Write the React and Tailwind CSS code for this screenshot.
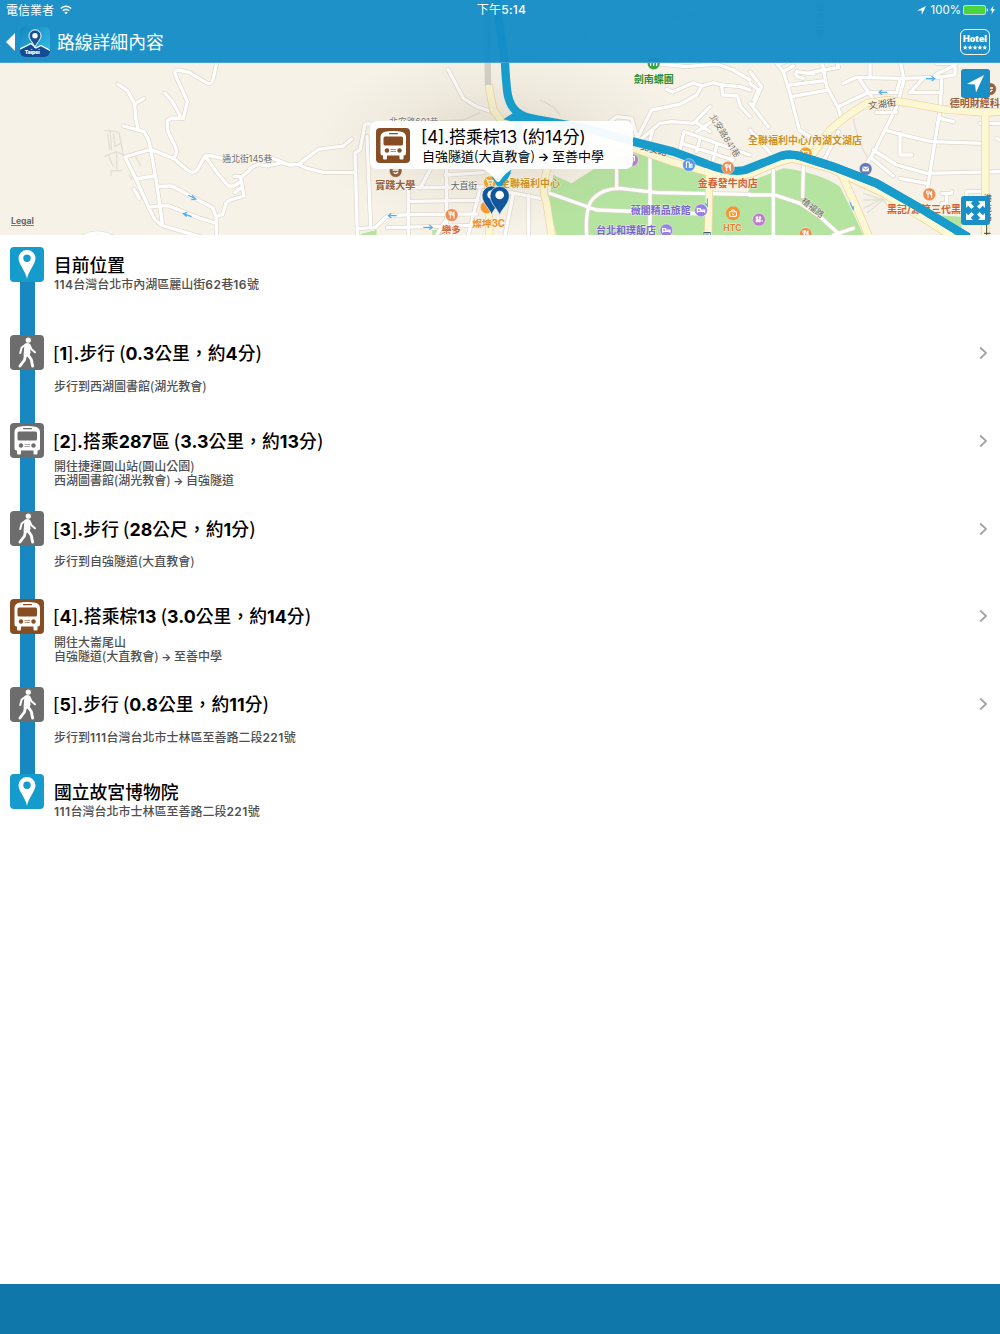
import React from "react";
import clsx from "clsx";

const steps = [
  { type: "place", title: "目前位置", lines: ["114台灣台北市內湖區麗山街62巷16號"] },
  { type: "walk", title: "[1].步行 (0.3公里，約4分)", lines: ["步行到西湖圖書館(湖光教會)"] },
  {
    type: "bus",
    title: "[2].搭乘287區 (3.3公里，約13分)",
    lines: ["開往捷運圓山站(圓山公園)", "西湖圖書館(湖光教會) → 自強隧道"],
  },
  { type: "walk", title: "[3].步行 (28公尺，約1分)", lines: ["步行到自強隧道(大直教會)"] },
  {
    type: "brownBus",
    title: "[4].搭乘棕13 (3.0公里，約14分)",
    lines: ["開往大崙尾山", "自強隧道(大直教會) → 至善中學"],
  },
  { type: "walk", title: "[5].步行 (0.8公里，約11分)", lines: ["步行到111台灣台北市士林區至善路二段221號"] },
  { type: "place", title: "國立故宮博物院", lines: ["111台灣台北市士林區至善路二段221號"] },
];

// The map is drawn in four 750 unit wide tiles, three units to a pixel.
const minorRoads = [
  [
    0,
    [
      "M354 73L382 92L404 132L408 180L416 212",
      "M404 132L431 116",
      "M370 198L432 215L446 240L452 268L375 291L408 357L445 440L465 480L488 497L600 530",
      "M452 268L470 370L480 440L488 497",
      "M408 357L462 348",
      "M470 379L515 378L638 443L648 470L650 530",
      "M445 442L480 437L508 438L600 475L650 490",
      "M402 388L418 415",
      "M452 268L520 295L565 332Q585 346 598 318L615 288L630 287L670 296",
      "M615 288L655 343L685 378L702 378L720 366",
      "M520 295Q532 285 528 265L502 210L502 182L515 174L550 175L562 125L525 42Q522 30 534 30L568 37L622 70Q636 74 640 55L652 0L658 -25",
      "M495 100L515 122L543 172",
      "M750 330L722 352L732 408L690 420Q675 428 675 440L668 463L648 470",
      "M702 349L722 350",
      "M705 398L720 386",
      "M250 530Q290 508 335 530",
    ],
  ],
  [
    750,
    [
      "M0 325L25 313L55 318L95 308L118 315L145 313L205 268L280 258L305 237",
      "M55 290L118 315",
      "M145 313L170 325L220 337L312 338",
      "M594 28L640 115L680 140L735 158",
      "M370 192L345 192L330 270L315 278L322 525",
      "M351 230L362 500",
      "M322 506L375 503L412 468L475 464L680 462",
      "M475 385V525",
      "M590 320V525",
      "M475 424L685 421",
      "M440 384L700 380",
      "M510 385L540 330",
      "M585 345L700 338",
      "M412 503L680 496",
      "M690 385L655 525",
      "M600 460L560 525",
    ],
  ],
  [
    1500,
    [
      "M480 12L560 20L650 12L700 30L750 60",
      "M500 88L518 96L580 68L606 78L590 105L540 133L455 150L412 235",
      "M606 78L640 68L665 75L720 80L750 90",
      "M665 75L668 105L712 108L722 140L750 170",
      "M420 240L480 190L515 185L580 190L630 140",
      "M460 205L450 240",
      "M585 185L630 215",
      "M590 215L650 175",
      "M330 185L350 170L395 175L412 235",
      "M540 270L552 215L750 285",
      "M545 250L700 300",
      "M600 235L590 275",
      "M650 255L640 300",
      "M700 275L690 320",
      "M350 330V385",
      "M450 285V525",
      "M150 400L290 450L620 462",
      "M260 525Q255 440 280 415Q310 385 360 385L470 398L750 403",
      "M20 395L120 415",
      "M85 405V525",
      "M40 400L15 525",
      "M0 395L20 395",
    ],
  ],
  [
    2250,
    [
      "M80 10L100 35L120 100L148 210L195 240L255 240",
      "M0 70L25 90L12 120",
      "M0 35L35 80L10 135",
      "M0 130L55 200",
      "M0 210L70 290",
      "M120 75L225 62",
      "M125 110L235 90",
      "M100 35L130 18",
      "M160 55Q130 50 140 35L190 42",
      "M215 0L230 80L265 145L275 180",
      "M180 38L265 22L260 0",
      "M265 140L350 100",
      "M280 70L320 52L455 55L560 52L615 45L615 15L555 45",
      "M360 0V52",
      "M330 60L375 125",
      "M450 0L462 60L440 140L375 270L345 320",
      "M350 98L440 98L450 60",
      "M480 98L520 55",
      "M480 98L575 98",
      "M380 158L440 157",
      "M575 60L570 150L530 400",
      "M410 212L480 230L545 245L700 250",
      "M450 220V285L485 285",
      "M370 270L440 315L530 340L750 335",
      "M365 295L430 348",
      "M450 355L530 370",
      "M570 175L610 185",
      "M690 190L750 190",
      "M265 215L225 295",
      "M70 330V525",
      "M0 405L75 405L150 430L210 470L270 525",
      "M160 320L158 410",
      "M250 525L310 505",
      "M575 400H605V395M590 400V430L575 430",
      "M650 410L650 395L700 395",
      "M740 235L750 240",
      "M560 10L620 10",
    ],
  ],
  [
    2250,
    ["M45 -30L95 10L190 -30L250 -45L355 -50L450 -30L560 -35L620 -55L700 -40L750 -60", "M200 -50L215 10M250 -45L265 20M445 -30L480 -100"],
  ],
];

const mainRoads = [
  "M1467 260L1480 330L1510 370L1490 540L1465 560L1468 705",
  "M1645 500Q1620 560 1640 610L1655 705",
  "M1560 365L1900 445L2020 487L2120 515L2190 532L2250 522L2325 490L2375 475L2490 505L2650 580L2850 705",
  "M2128 510L2125 705",
  "M2440 460L2490 390Q2540 345 2600 310L2660 300L2720 308L2830 328L2955 338L3000 335",
  "M2956 340V705",
  "M2520 515L2560 600L2605 705",
];

const parks = [
  "M1660 525L1715 550L1785 505L1890 450L2125 520L2112 705H1670L1645 610Z",
  "M2140 585L2240 585L2260 540L2350 505Q2450 515 2520 560L2560 640L2590 705H2135Z",
  "M2795 645L2885 650L2885 705H2850L2790 660Z",
  "M1090 700L1130 690L1130 705H1080Z",
  "M1297 690H1325V705H1297Z",
];

const labels = [
  { x: 33, y: 672, text: "Legal", size: 26, color: "#666", bold: true, underline: true },
  { x: 667, y: 487, text: "通北街145巷", size: 26.5, color: "#6d6d6d" },
  { x: 1168, y: 374, text: "北安路601巷", size: 26, color: "#777" },
  { x: 1126, y: 568, text: "實踐大學", size: 30, color: "#94613e", bold: true },
  { x: 1352, y: 568, text: "大直街", size: 26.5, color: "#666" },
  { x: 1325, y: 700, text: "樂多", size: 29, color: "#d4683e", bold: true },
  { x: 1417, y: 680, text: "燦坤3C", size: 29, color: "#ee8c26", bold: true },
  { x: 1500, y: 560, text: "全聯福利中心", size: 30, color: "#c99128", bold: true },
  { x: 1901, y: 249, text: "劍南蝶園", size: 30, color: "#268c32", bold: true },
  { x: 1892, y: 643, text: "薇閣精品旅館", size: 30, color: "#7a63d1", bold: true },
  { x: 1788, y: 702, text: "台北和璞飯店", size: 30, color: "#7a63d1", bold: true },
  { x: 2093, y: 560, text: "金春發牛肉店", size: 30, color: "#cf6237", bold: true },
  { x: 2170, y: 694, text: "HTC", size: 26, color: "#ed7d2c", bold: true },
  { x: 2244, y: 432, text: "全聯福利中心/內湖文湖店", size: 30, color: "#c99128", bold: true },
  { x: 2606, y: 328, text: "文湖街", size: 28, color: "#555", rotate: -8 },
  { x: 2849, y: 322, text: "德明財經科", size: 30, color: "#94613e", bold: true },
  { x: 2661, y: 639, text: "黑記/源第三代黑", size: 30, color: "#cf6237", bold: true },
  { x: 2402, y: 607, text: "植福路", size: 26, color: "#666", rotate: 38 },
  { x: 2128, y: 350, text: "北安路841巷", size: 26, color: "#777", rotate: 58 },
  { x: 2108, y: 716, text: "四", size: 26, color: "#444" },
];

const Label = ({ x, y, text, size, color, bold, rotate = 0, underline }) => (
  <text
    x={x}
    y={y}
    fontSize={size}
    fill={color}
    fontWeight={bold ? 700 : 400}
    stroke="#fffaf0"
    strokeOpacity=".7"
    strokeWidth="3"
    paintOrder="stroke"
    strokeLinejoin="round"
    textDecoration={underline ? "underline" : undefined}
    transform={`rotate(${rotate} ${x} ${y})`}
  >
    {text}
  </text>
);

const Fork = () => (
  <g fill="none" stroke="#fff" strokeWidth="3" strokeLinecap="round">
    <path d="M-8 -10V-4Q-8 0 -4 0Q0 0 0 -4V-10M-4 -10V10" />
    <path d="M7 10V-10Q3 -8 3 1H7" fill="#fff" />
  </g>
);

const Bed = () => (
  <path d="M-11 7V-8M-11 3H11V7M11 3V-1H-2V-5H-11" fill="none" stroke="#fff" strokeWidth="3.5" />
);

const Cart = () => (
  <g fill="none" stroke="#fff" strokeWidth="3">
    <path d="M-12 -8H-8L-5 3H7L10 -5H-7" />
    <circle cx="-3" cy="8" r="1.5" />
    <circle cx="6" cy="8" r="1.5" />
  </g>
);

const Poi = ({ x, y, color, children }) => (
  <g transform={`translate(${x} ${y})`}>
    <circle r="19" fill={color} stroke="#fff" strokeOpacity=".6" strokeWidth="2" />
    {children}
  </g>
);

const Pin = ({ x, y }) => (
  <g transform={`translate(${x} ${y})`}>
    <path
      d="M0 86C-3 68 -29 51 -29 26A29 28 0 0 1 29 26C29 51 3 68 0 86Z"
      fill="#10569b"
      stroke="#fff"
      strokeWidth="2"
    />
    <circle cy="24" r="13" fill="#fff" />
  </g>
);

const RouteMap = () => (
  <svg
    viewBox="0 0 3000 705"
    className="absolute inset-0 h-[235px] w-[1000px] font-['Inter','Noto_Sans_CJK_TC',sans-serif]"
  >
    <defs>
      <radialGradient id="shade">
        <stop offset="0" stopColor="#8d7f6a" stopOpacity=".24" />
        <stop offset=".6" stopColor="#a19784" stopOpacity=".09" />
        <stop offset="1" stopColor="#a19784" stopOpacity="0" />
      </radialGradient>
    </defs>
    <rect width="3000" height="705" fill="#f7f2e7" />
    {parks.map((d) => (
      <path key={d} d={d} fill="#b5e4a0" />
    ))}
    <g fill="none" stroke="#e2dfd4" strokeWidth="4">
      <path d="M313 392H330L357 398L370 465L350 455L313 470M330 392L335 450M322 400L330 450M340 400L345 440L362 430M350 455V510M325 465L340 500M333 527V512H367M405 465L422 498M387 525L398 540" />
      <path d="M2560 355Q2580 450 2610 480M2590 600L2650 600L2680 640M2600 640L2650 600L2590 580M2590 625L2660 590M1620 300L1660 320L1680 345" />
      <path d="M1100 370L1390 360L1440 338" />
      <path d="M1365 80Q1500 200 1650 180T1740 60M1960 0Q2010 70 2050 50T2120 70" />
    </g>
    <g fill="none" strokeLinecap="round" strokeLinejoin="round">
      {minorRoads.map(([x, roads], i) => (
        <path key={i} d={roads.join("")} transform={`translate(${x} 180)`} stroke="#ded6cb" strokeWidth="14" />
      ))}
      {minorRoads.map(([x, roads], i) => (
        <path key={i} d={roads.join("")} transform={`translate(${x} 180)`} stroke="#fff" strokeWidth="10" />
      ))}
      <path d={mainRoads.join("")} stroke="#f3cf9c" strokeWidth="24" />
      <path d={mainRoads.join("")} stroke="#fcf8d3" strokeWidth="20" />
      <path d="M1460 0L1464 255" stroke="#d3d0c7" strokeWidth="19" strokeLinecap="butt" />
    </g>
    <ellipse cx="1500" cy="420" rx="560" ry="270" fill="url(#shade)" />
    <Label x={1920} y={448} text="北安路" size={27} color="#555" rotate={14} />
    <g fill="none" stroke="#189ccb" strokeWidth="25" strokeLinejoin="round">
      <path d="M1560 350L1525 500L1500 560" />
      <path d="M1488 0L1515 190C1520 280 1522 310 1550 335Q1570 352 1610 358L1760 385L1900 425L2020 455L2120 492Q2190 520 2235 510L2345 467Q2370 460 2400 468L2500 500L2630 550L2770 630L2905 712" />
    </g>
    <path d="M1560 370L1510 358L1545 335L1640 360Z" fill="#189ccb" />
    <g fill="none" stroke="#4fb0ef" strokeWidth="3.5">
      <path d="M565 586L588 597M576 586L588 597L574 599M575 650L550 641M562 637L550 641L560 650" />
      <path d="M1190 647H1165M1174 640L1165 647L1174 654M1270 682H1297M1288 675L1297 682L1288 689" />
      <path d="M2778 236H2804M2795 229L2804 236L2795 243M2662 277H2637M2646 270L2637 277L2646 284" />
      <path d="M2122 595V618L2116 610M2550 607L2560 630L2560 619" />
    </g>
    <Poi x={1187} y={513} color="#94613e">
      <path d="M-9 -3H9M-6 4Q0 11 7 3" stroke="#fff" strokeWidth="4" fill="none" />
    </Poi>
    <Poi x={1355} y={645} color="#f08a50"><Fork /></Poi>
    <Poi x={1470} y={547} color="#eda42f"><Cart /></Poi>
    <Poi x={1460} y={622} color="#f39b31" />
    <Poi x={1961} y={190} color="#34a544">
      <path d="M-11 0Q-5 -10 0 0Q5 -10 11 0M-9 8V-3M9 8V-3M0 8V0" stroke="#fff" strokeWidth="4" fill="none" />
    </Poi>
    <Poi x={1896} y={480} color="#bb7acb">
      <path d="M-6 7V-8L7 -11V4" stroke="#fff" strokeWidth="4" fill="none" />
    </Poi>
    <Poi x={2067} y={495} color="#5b98dd">
      <path d="M-8 9V-9H1V9M5 9V-3H9V9" stroke="#fff" strokeWidth="3" fill="none" />
    </Poi>
    <Poi x={2184} y={503} color="#f08a50"><Fork /></Poi>
    <Poi x={2103} y={631} color="#9880e8"><Bed /></Poi>
    <Poi x={1999} y={691} color="#9880e8"><Bed /></Poi>
    <Poi x={2199} y={640} color="#f59437">
      <circle r="21" fill="#f59437" />
      <path d="M-10 -5H10V9H-10ZM-4 -5V-10H4V-5M-3 1L3 4" stroke="#fff" strokeWidth="3" fill="none" />
    </Poi>
    <Poi x={2277} y={659} color="#bb7acb">
      <path d="M-10 -1H5V8H-10ZM6 3L11 0V8Z" fill="#fff" />
      <circle cx="-6" cy="-6" r="4" fill="#fff" />
      <circle cx="3" cy="-6" r="4" fill="#fff" />
    </Poi>
    <Poi x={2417} y={460} color="#eda42f"><Cart /></Poi>
    <Poi x={2597} y={507} color="#6878b7">
      <path d="M-10 -7H10V7H-10Z" fill="#fff" />
      <path d="M-10 -6L0 2L10 -6" stroke="#6878b7" strokeWidth="2.5" fill="none" />
    </Poi>
    <Poi x={2788} y={583} color="#f08a50"><Fork /></Poi>
    <Poi x={2417} y={702} color="#f08a50"><Fork /></Poi>
    <Poi x={2970} y={267} color="#94613e">
      <path d="M-9 -3H9M-6 4Q0 11 7 3" stroke="#fff" strokeWidth="4" fill="none" />
    </Poi>
    {labels.map((label) => (
      <Label key={label.text + label.x} {...label} />
    ))}
    <text fontSize="24" fill="#444">
      <tspan x="2951" y="604">港</tspan>
      <tspan x="2951" y="632">墘</tspan>
      <tspan x="2951" y="660">路</tspan>
    </text>
    <path d="M2960 665V705M2952 700H2972" stroke="#444" strokeWidth="3" />
    <text fontSize="25" fill="#666" transform="translate(2452 10) rotate(92)">
      湖街21巷
    </text>
    {/* the route again, above the street names and shops it covers */}
    <path
      d="M2345 467Q2370 460 2400 468L2500 500L2630 550L2770 630L2905 712"
      fill="none"
      stroke="#189ccb"
      strokeWidth="25"
    />
    <path d="M1475 530L1498 568L1534 518Z" fill="#189ccb" />
    <Pin x={1475} y={560} />
    <Pin x={1499} y={561} />
  </svg>
);

const BusIcon = ({ color }) => (
  <svg viewBox="0 0 34 35" className="h-[35px] w-[34px] shrink-0">
    <rect width="34" height="35" rx="4" fill={color} />
    <path
      d="M4.500 9Q4.500 5.500 8 4Q12 3 17.200 3Q22 3 26.500 4Q30 5.500 30 9V25.500Q30 27.500 28 27.500H27.500V30.500Q27.500 31.500 26.500 31.500H24.500Q23.500 31.500 23.500 30.500V27.500H11V30.500Q11 31.500 10 31.500H8Q7 31.500 7 30.500V27.500H6.500Q4.500 27.500 4.500 25.500Z"
      fill="#fff"
    />
    <rect x="13" y="5" width="9" height="1.300" rx=".6" fill={color} />
    <rect x="7.500" y="8.500" width="19.500" height="9" rx="1.500" fill={color} />
    <circle cx="11" cy="22.500" r="2.200" fill={color} />
    <circle cx="23.500" cy="22.500" r="2.200" fill={color} />
    <path d="M14.500 21.500H20M14.500 23.500H20" stroke={color} strokeWidth="1" opacity=".6" />
  </svg>
);

const WalkIcon = () => (
  <svg viewBox="0 0 34 35" className="h-[35px] w-[34px] shrink-0">
    <rect width="34" height="35" rx="4" fill="#6d6d6d" />
    <circle cx="18.300" cy="5.200" r="2.600" fill="#fff" />
    <path d="M14.500 9Q18 7 20 9.500L20.500 18L18.500 22L13.500 20.500Z" fill="#fff" />
    <g fill="none" stroke="#fff" strokeLinecap="round" strokeLinejoin="round">
      <path d="M15.500 9.700L11.700 12.500L10.200 18" strokeWidth="2" />
      <path d="M19.500 10L21.500 14.300L25 17.300" strokeWidth="2" />
      <path d="M15.500 20L14.500 25L10 31" strokeWidth="2.900" />
      <path d="M17.500 19L21.300 24.500L22.600 31" strokeWidth="2.900" />
    </g>
  </svg>
);

const PlaceIcon = () => (
  <svg viewBox="0 0 34 35" className="h-[35px] w-[34px] shrink-0">
    <rect width="34" height="35" rx="4" fill="#159bcc" />
    <path
      d="M17 32C16 25 8.500 17 8.500 11.300A8.500 8.300 0 0 1 25.500 11.300C25.500 17 18 25 17 32ZM17 7.500A3.700 3.700 0 1 0 17 14.900A3.700 3.700 0 1 0 17 7.500Z"
      fill="#fff"
      fillRule="evenodd"
    />
  </svg>
);

const StepIcon = ({ type }) => {
  if (type === "walk") return <WalkIcon />;
  if (type === "bus") return <BusIcon color="#6d6d6d" />;
  if (type === "brownBus") return <BusIcon color="#864e22" />;
  return <PlaceIcon />;
};

// Latin digits are set in Inter, everything else in the CJK face.
const Mixed = ({ text, className }) =>
  text.split(/([0-9.]+|→)/).map((part, i) => {
    if (i % 2 === 0) return part;
    return (
      <span key={i} className={part === "→" ? "font-['Inter'] text-[0.88em] leading-none font-bold" : className}>
        {part}
      </span>
    );
  });

const Step = ({ step, last }) => {
  const isPlace = step.type === "place";

  return (
    <li className="flex h-[87.85px] pr-3 pl-[10px]">
      <div className="flex w-[34px] flex-col items-center">
        <div className={clsx("h-[12.300px] w-[15px] shrink-0", step.title !== "目前位置" && "bg-[#1a88c0]")} />
        <StepIcon type={step.type} />
        <div className={clsx("w-[15px] flex-1", !last && "bg-[#1a88c0]")} />
      </div>
      <div className="ml-[10px] flex flex-1 flex-col pt-[17px]">
        <h3
          className={clsx(
            "h-[25px] text-[17.800px] leading-[24px] font-medium whitespace-pre text-black",
            !isPlace && "-ml-px tracking-[0.05px]"
          )}
        >
          <Mixed text={step.title} className="font-['Inter'] leading-none font-bold" />
        </h3>
        <div
          className={clsx(
            "flex flex-col justify-center text-[12px] leading-[13.700px] font-medium text-[#505050]",
            isPlace ? "h-[14px]" : "h-[41.500px]"
          )}
        >
          {step.lines.map((line) => (
            <p key={line} className="whitespace-pre">
              <Mixed text={line} className="font-['Inter'] leading-none font-semibold tracking-[0.4px]" />
            </p>
          ))}
        </div>
      </div>
      {!isPlace && (
        <svg viewBox="0 0 9 14" className="mt-[23px] h-[14px] w-[9px]">
          <path d="M1.200 1.500L7 7L1.200 12.500" fill="none" stroke="#a3a3a3" strokeWidth="1.800" />
        </svg>
      )}
    </li>
  );
};

const StatusBar = () => (
  <div className="grid h-[20px] grid-cols-3 items-center pr-[6px] pl-[6px] text-[12px] leading-[20px]">
    <div className="flex items-center gap-[6px]">
      <span>電信業者</span>
      <svg viewBox="0 0 12 10" className="h-[10px] w-[12px]">
        <path d="M.8 3.500Q6 -1 11.200 3.500M2.800 5.800Q6 3 9.200 5.800" fill="none" stroke="#fff" strokeWidth="1.500" />
        <path d="M4.300 7.500Q6 6 7.700 7.500L6 9.300Z" fill="#fff" />
      </svg>
    </div>
    <div className="pl-[3px] text-center font-['Inter','Noto_Sans_CJK_TC',sans-serif] font-medium tracking-[0.25px]">
      <span className="font-normal">下午</span>5:14
    </div>
    <div className="flex items-center justify-end">
      <svg viewBox="0 0 9 9" className="mr-[5px] h-[9px] w-[9px]">
        <path d="M0 4.500L9 0L4.700 9V4.500Z" fill="#fff" />
      </svg>
      <span className="mr-[2px] font-['Inter'] text-[11.500px]">100%</span>
      <svg viewBox="0 0 33 10" className="-mr-[2px] h-[10px] w-[33px]">
        <rect x=".5" y=".5" width="22" height="9" rx="1.500" fill="#4cd43f" stroke="#b9dfef" />
        <path d="M24 3.500V6.500Q25.500 5 24 3.500" fill="#fff" stroke="#fff" strokeWidth=".5" />
        <path d="M30.500 .5L27 5.500H29.300L28.400 9.500L32 4.300H29.700Z" fill="#fff" />
      </svg>
    </div>
  </div>
);

const AppLogo = () => (
  <svg viewBox="0 0 30 30" className="h-[30px] w-[30px]">
    <defs>
      <linearGradient id="logo" x1="0" y1="0" x2="1" y2="1">
        <stop offset="0" stopColor="#1287bd" />
        <stop offset="1" stopColor="#36bfe7" />
      </linearGradient>
      <clipPath id="logoClip">
        <rect width="30" height="30" rx="5" />
      </clipPath>
    </defs>
    <g clipPath="url(#logoClip)">
      <rect width="30" height="30" fill="url(#logo)" />
      <path d="M0 23L12 17L16 21L21 19L30 24V25Q30 30 24 30H6Q0 30 0 25Z" fill="#164b94" />
      <path d="M0 22L11 16.500L16 21L21 18.500L30 23.500" fill="none" stroke="#fff" strokeWidth="1.200" />
    </g>
    <path
      d="M15 21C14 16 9 13 9 8.800A6 6 0 0 1 21 8.800C21 13 16 16 15 21Z"
      fill="#195293"
      stroke="#fff"
      strokeWidth="1"
    />
    <circle cx="15" cy="8.800" r="2.700" fill="#fff" />
    <text x="4.800" y="27" fontSize="5.200" fontWeight="900" fill="#fff" fontFamily="Inter" textLength="15">
      Taipei
    </text>
  </svg>
);

const HotelButton = () => (
  <button className="flex h-[26px] w-[30px] flex-col items-center rounded-[6px] border-[1.500px] border-white pt-[4px]">
    <svg viewBox="0 0 26 18" className="h-[18px] w-[26px]">
      <text
        x="1"
        y="7.500"
        fontSize="8.500"
        fontWeight="900"
        fill="#fff"
        fontFamily="Inter"
        textLength="24"
        lengthAdjust="spacingAndGlyphs"
      >
        Hotel
      </text>
      {[3.2, 8.1, 13, 17.9, 22.8].map((x) => (
        <path
          key={x}
          transform={`translate(${x} 13.500)`}
          d="M0 -2.400L.7 -.8L2.400 -.7L1.100 .5L1.500 2.200L0 1.200L-1.500 2.200L-1.100 .5L-2.400 -.7L-.7 -.8Z"
          fill="#fff"
        />
      ))}
    </svg>
  </button>
);

const Header = () => (
  <header className="relative h-[63px] border-b border-[#46a5d2] bg-[#168dc6]/97 text-white">
    <StatusBar />
    <div className="flex h-[43px] items-center justify-between pr-[10px] pl-[6px]">
      <div className="flex items-center">
        <svg viewBox="0 0 9 18" className="mr-[5px] h-[18px] w-[9px]">
          <path d="M9 0V18L0 9Z" fill="#fff" />
        </svg>
        <AppLogo />
        <h1 className="ml-[7px] pb-[2px] text-[17.800px] leading-[28px]">路線詳細內容</h1>
      </div>
      <HotelButton />
    </div>
  </header>
);

const Callout = () => (
  <div className="absolute top-[121px] left-[370px] flex h-[48px] w-[263px] items-center rounded-[7px] bg-white/95 pl-[6px]">
    <BusIcon color="#864e22" />
    <div className="ml-[11px] whitespace-pre text-black">
      <p className="font-['Inter','Noto_Sans_CJK_TC',sans-serif] text-[16.900px] leading-[20px]">
        [4].搭乘棕13 (約14分)
      </p>
      <p className="pl-px text-[13px] leading-[17px]">
        自強隧道(大直教會) <span className="font-['Inter'] text-[12px] leading-none font-semibold">→</span> 至善中學
      </p>
    </div>
    <svg viewBox="0 0 30 14" className="absolute top-[48px] left-[113px] h-[14px] w-[30px]">
      <path d="M0 0H30Q23 3 17 12Q15 14 13 12Q7 3 0 0Z" fill="#fff" fillOpacity=".95" />
    </svg>
  </div>
);

const MapButtons = () => (
  <div className="absolute top-[69px] right-[10px] flex flex-col gap-[98px]">
    <button className="h-[29px] w-[29px] rounded-[3px] bg-[#198fc6]">
      <svg viewBox="0 0 29 29">
        <path d="M6 15L23 6L15 23.500L14 15.500Z" fill="#fff" />
      </svg>
    </button>
    <button className="h-[29px] w-[29px] rounded-[3px] bg-[#198fc6]">
      <svg viewBox="0 0 29 29" fill="#fff">
        <path id="arrow" d="M5 5H12L9.800 7.200L13 10.400L10.400 13L7.200 9.800L5 12Z" />
        <use href="#arrow" transform="matrix(-1 0 0 1 29 0)" />
        <use href="#arrow" transform="matrix(1 0 0 -1 0 29)" />
        <use href="#arrow" transform="matrix(-1 0 0 -1 29 29)" />
      </svg>
    </button>
  </div>
);

const App = () => {
  return (
    <div className="flex h-[1334px] w-[1000px] flex-col overflow-hidden bg-white font-['Noto_Sans_CJK_TC',sans-serif]">
      <section className="relative h-[235px] shrink-0 overflow-hidden">
        <RouteMap />
        <Header />
        <Callout />
        <MapButtons />
      </section>
      <ul className="flex-1">
        {steps.map((step, i) => (
          <Step key={step.title} step={step} last={i === steps.length - 1} />
        ))}
      </ul>
      <footer className="h-[50px] shrink-0 bg-[#1077aa]" />
    </div>
  );
};

export default App;
